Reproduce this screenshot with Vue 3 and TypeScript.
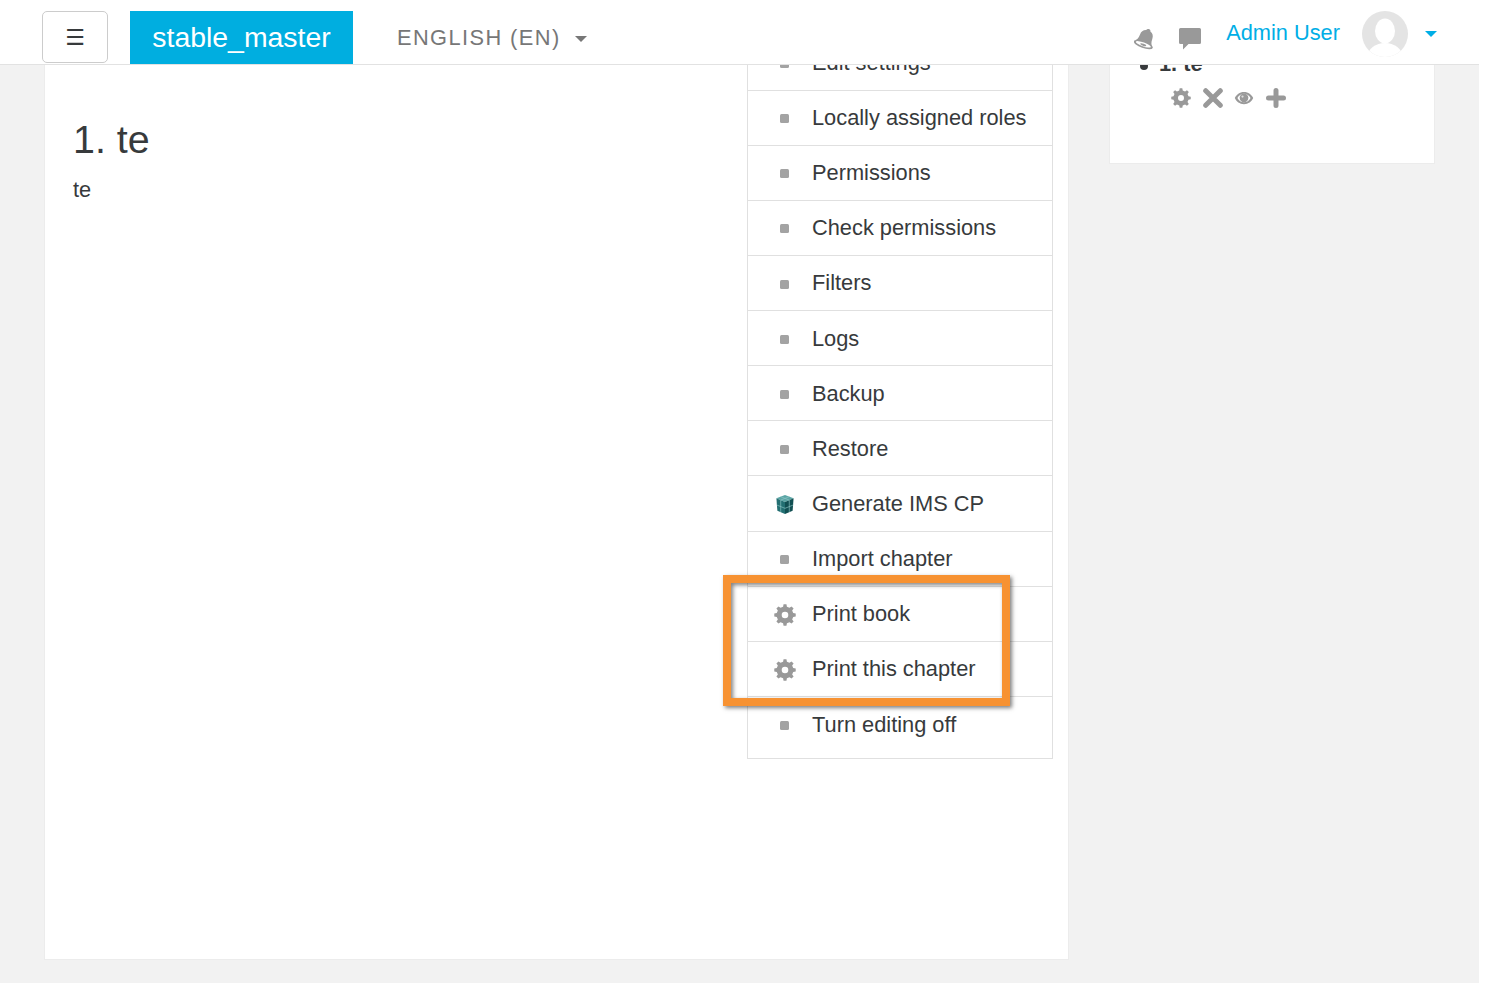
<script setup lang="ts">
interface MenuRow {
  label: string
  icon: 'dot' | 'gear' | 'cube'
}

const rows: MenuRow[] = [
  { label: 'Edit settings', icon: 'dot' },
  { label: 'Locally assigned roles', icon: 'dot' },
  { label: 'Permissions', icon: 'dot' },
  { label: 'Check permissions', icon: 'dot' },
  { label: 'Filters', icon: 'dot' },
  { label: 'Logs', icon: 'dot' },
  { label: 'Backup', icon: 'dot' },
  { label: 'Restore', icon: 'dot' },
  { label: 'Generate IMS CP', icon: 'cube' },
  { label: 'Import chapter', icon: 'dot' },
  { label: 'Print book', icon: 'gear' },
  { label: 'Print this chapter', icon: 'gear' },
  { label: 'Turn editing off', icon: 'dot' },
]

function gearPath(teeth: number, outer: number, root: number, hole: number): string {
  const c = 12
  const step = (Math.PI * 2) / teeth
  const pts: string[] = []
  for (let i = 0; i < teeth; i++) {
    const a = i * step - Math.PI / 2
    const w = step * 0.2
    const list: [number, number][] = [
      [root, a - w * 1.45],
      [outer, a - w * 0.85],
      [outer, a + w * 0.85],
      [root, a + w * 1.45],
    ]
    for (const [r, t] of list) {
      pts.push(`${(c + r * Math.cos(t)).toFixed(2)} ${(c + r * Math.sin(t)).toFixed(2)}`)
    }
  }
  const body = `M${pts.join('L')}Z`
  return `${body}M${c - hole} ${c}a${hole} ${hole} 0 1 0 ${hole * 2} 0a${hole} ${hole} 0 1 0 ${-hole * 2} 0Z`
}

const gear = gearPath(8, 11.8, 9.2, 3.6)
</script>

<template>
  <div class="page">
    <header class="navbar">
      <button class="burger" type="button">☰</button>
      <div class="brand">stable_master</div>
      <div class="lang">ENGLISH (EN)<span class="caret grey"></span></div>
      <div class="nav-right">
        <svg class="bell" viewBox="0 0 24 24" width="23" height="23">
          <g transform="rotate(20 12 12)" fill="#999">
            <path d="M12 1.5c1.3 0 2.2.8 2.3 1.9 3 .9 4.5 3.4 4.5 6.6 0 4 1.100 6 2.700 7.500H2.500C4.100 16 5.200 14 5.200 10c0-3.200 1.500-5.700 4.500-6.600.1-1.100 1-1.900 2.300-1.900z" />
            <ellipse cx="12" cy="18.800" rx="10.500" ry="3.600" />
            <ellipse cx="12" cy="18.500" rx="8.300" ry="2" fill="#fff" />
            <ellipse cx="12" cy="18.900" rx="3.400" ry="1.100" />
          </g>
        </svg>
        <svg class="chat" viewBox="0 0 22 22" width="22" height="22">
          <path fill="#999" d="M1.500 0h19A1.500 1.500 0 0 1 22 1.500v13a1.500 1.500 0 0 1-1.500 1.500H9.500L4 21.500V16H1.500A1.500 1.500 0 0 1 0 14.500v-13A1.500 1.500 0 0 1 1.500 0z" />
        </svg>
        <span class="user">Admin User</span>
        <svg class="avatar" viewBox="0 0 46 46" width="46" height="46">
          <defs>
            <clipPath id="avatar-clip"><circle cx="23" cy="23" r="23" /></clipPath>
          </defs>
          <circle cx="23" cy="23" r="23" fill="#e4e4e4" />
          <g clip-path="url(#avatar-clip)" fill="#fff">
            <ellipse cx="23" cy="20" rx="10" ry="12.500" />
            <ellipse cx="23" cy="45" rx="17" ry="13" />
          </g>
        </svg>
        <span class="caret blue"></span>
      </div>
    </header>

    <div class="content">
      <main class="card">
        <h1 class="title">1. te</h1>
        <p class="text">te</p>

        <nav class="menu">
          <div v-for="row in rows" :key="row.label" class="row">
            <span class="row-icon">
              <span v-if="row.icon === 'dot'" class="dot"></span>
              <svg v-else-if="row.icon === 'gear'" viewBox="0 0 24 24" width="22" height="22">
                <path fill="#999" fill-rule="evenodd" :d="gear" />
              </svg>
              <svg v-else viewBox="0 0 20 22" width="20" height="21">
                <path fill="#5ba5a5" d="M10 1l9 3.500-9 3.800-9-3.800z" />
                <path fill="#236f72" d="M1 4.500l9 3.800V21l-8-3.500L1 4.500z" />
                <path fill="#114f52" d="M19 4.500l-9 3.800V21l8-3.500.999-13z" />
                <path fill="none" stroke="#8cc4c4" stroke-width=".7" d="M5.500 2.800l9 3.600M14.500 2.800l-9 3.600M5.500 6.400V19M14.500 6.400V19M1.300 11.500l8.700 3.500 8.700-3.500" />
              </svg>
            </span>
            <span class="row-label">{{ row.label }}</span>
          </div>
          <div class="highlight"></div>
        </nav>
      </main>

      <aside class="side">
        <div class="tree-item"><span class="tree-dot"></span><strong>1. te</strong></div>
        <div class="actions">
          <svg viewBox="0 0 24 24" width="20" height="20">
            <path fill="#999" fill-rule="evenodd" :d="gear" />
          </svg>
          <svg viewBox="0 0 20 20" width="20" height="20">
            <path fill="none" stroke="#999" stroke-width="5" stroke-linecap="round" d="M2.700 2.700l14.600 14.600M17.300 2.700L2.700 17.300" />
          </svg>
          <svg viewBox="0 0 22 16" width="20" height="14">
            <path fill="#999" fill-rule="evenodd" d="M11 1c5 0 8.800 3 10.500 7-1.700 4-5.500 7-10.500 7S2.200 12 .5 8C2.200 4 6 1 11 1zM3.500 8c1.500 3 4.300 4.900 7.500 4.900s6-1.900 7.500-4.900c-1.500-3-4.300-4.900-7.500-4.900S5 5 3.500 8z" />
            <circle cx="11" cy="7.800" r="5" fill="#999" />
            <circle cx="9.300" cy="6.300" r="1.300" fill="#ddd" />
          </svg>
          <svg viewBox="0 0 20 20" width="20" height="20">
            <path fill="none" stroke="#999" stroke-width="5" stroke-linecap="round" d="M10 2.500v15M2.500 10h15" />
          </svg>
        </div>
      </aside>
    </div>
  </div>
</template>

<style scoped>
.page {
  position: relative;
  width: 1479px;
  height: 983px;
  overflow: hidden;
  background: #f2f2f2;
  font-family: "Liberation Sans", Arial, sans-serif;
  color: #373a3c;
}

.navbar {
  position: absolute;
  z-index: 5;
  top: 0;
  left: 0;
  right: 0;
  height: 65px;
  box-sizing: border-box;
  display: flex;
  align-items: flex-start;
  padding: 11px 42px 0;
  background: #fff;
  border-bottom: 1px solid #e2e2e2;
}

.burger {
  width: 66px;
  height: 52px;
  padding: 0;
  border: 1px solid #ccc;
  border-radius: 5px;
  background: #fff;
  color: #373a3c;
  font: 22px/52px "DejaVu Sans", sans-serif;
}

.brand {
  margin-left: 22px;
  width: 223px;
  height: 53px;
  background: #00aee0;
  color: #fff;
  font-size: 28.4px;
  line-height: 53px;
  text-align: center;
}

.lang {
  margin-left: 44px;
  display: flex;
  align-items: center;
  height: 53px;
  color: #777;
  font-size: 21.8px;
  letter-spacing: 1.42px;
}

.caret {
  display: inline-block;
  width: 0;
  height: 0;
  border-left: 6px solid transparent;
  border-right: 6px solid transparent;
}

.caret.grey {
  margin-left: 14px;
  margin-top: 3px;
  border-top: 6px solid #777;
}

.caret.blue {
  margin-left: 17px;
  margin-top: 20px;
  border-top: 6px solid #00aee6;
}

.nav-right {
  margin-left: auto;
  display: flex;
  align-items: flex-start;
}

.bell {
  margin-top: 16px;
}

.chat {
  margin-top: 17px;
  margin-left: 22px;
}

.user {
  margin-left: 25px;
  margin-top: 9px;
  color: #00aee6;
  font-size: 21.8px;
  line-height: 25px;
}

.avatar {
  margin-left: 22px;
}

.content {
  display: flex;
  align-items: flex-start;
  gap: 40px;
  margin-top: -60px;
  padding-left: 44px;
}

.card {
  position: relative;
  width: 1025px;
  height: 1020px;
  box-sizing: border-box;
  padding: 172px 28px 0;
  background: #fff;
  border: 1px solid #ececec;
}

.title {
  margin: 0;
  font-size: 39.4px;
  font-weight: 400;
  line-height: 52px;
}

.text {
  margin: 12px 0 0;
  font-size: 21.8px;
  line-height: 26px;
}

.menu {
  position: absolute;
  top: 94.6px;
  right: 15px;
  width: 306px;
  box-sizing: border-box;
  padding-bottom: 6px;
  background: #fff;
  border: 1px solid #e0e0e0;
  border-top: 0;
}

.row {
  display: flex;
  align-items: center;
  height: 55.12px;
  box-sizing: border-box;
  border-bottom: 1px solid #e0e0e0;
  font-size: 21.8px;
}

.row:nth-last-child(2) {
  border-bottom: 0;
}

.row-icon {
  display: flex;
  align-items: center;
  justify-content: center;
  width: 73px;
  margin-right: -9px;
  height: 24px;
  padding-top: 2px;
}

.dot {
  width: 9px;
  height: 9px;
  border-radius: 1.5px;
  background: #a3a3a3;
}

.row-label {
  margin-top: 0.72px;
  line-height: 26px;
}

.row:nth-last-child(2) .row-label {
  margin-top: 2px;
}

.highlight {
  position: absolute;
  left: -25px;
  top: 539.6px;
  width: 287px;
  height: 131px;
  box-sizing: border-box;
  border: 8px solid #f79232;
  box-shadow: 2px 2px 4px rgba(0, 0, 0, 0.5), inset 2px 2px 4px rgba(0, 0, 0, 0.5);
}

.side {
  width: 326px;
  height: 224px;
  box-sizing: border-box;
  padding: 110px 0 0 30px;
  background: #fff;
  border: 1px solid #ececec;
}

.tree-item {
  display: flex;
  align-items: center;
  height: 26px;
  font-size: 21.8px;
}

.tree-dot {
  width: 8px;
  height: 8px;
  margin-top: 3px;
  margin-right: 11px;
  border-radius: 50%;
  background: #373a3c;
}

.actions {
  display: flex;
  align-items: center;
  gap: 11.67px;
  margin-top: 11px;
  margin-left: 31px;
}
</style>

<style>
body {
  background: #fff;
  overflow: hidden;
}
</style>
